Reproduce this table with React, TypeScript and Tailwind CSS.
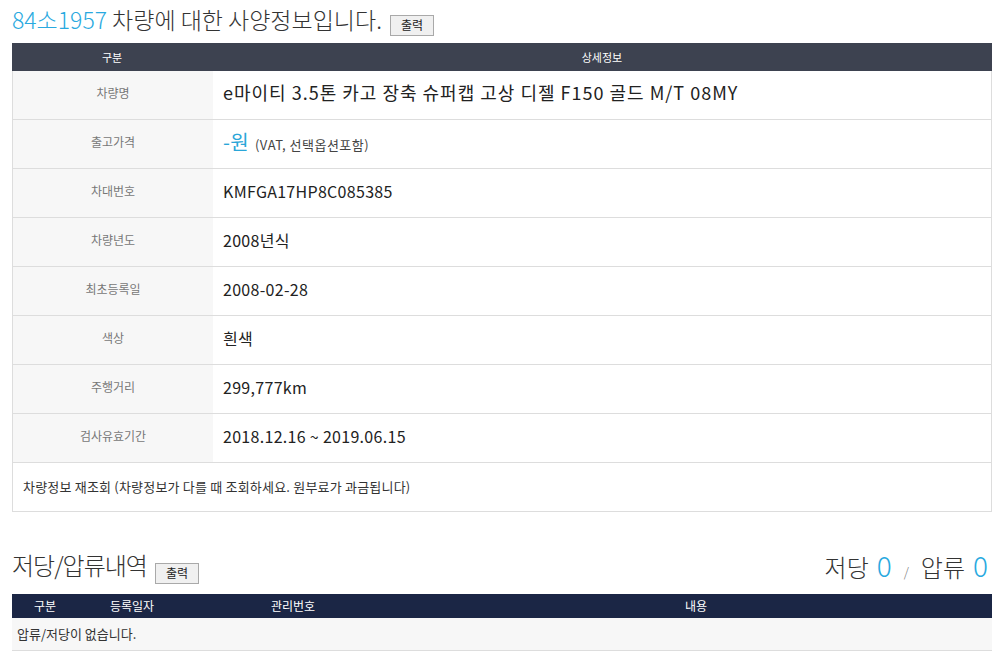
const font = { fontFamily: '"Noto Sans CJK KR", "Noto Sans", sans-serif' }

const specs: { label: string; value: React.ReactNode }[] = [
  { label: "차량명", value: <span className="text-[18px] tracking-[1px]">e마이티 3.5톤 카고 장축 슈퍼캡 고상 디젤 F150 골드 M/T 08MY</span> },
  {
    label: "출고가격",
    value: (
      <span className="flex items-baseline">
        <span className="text-[20px] text-[#2aa6d8]">-원</span>
        <span className="ml-[6px] text-[13px] tracking-[0.5px] text-[#444]">(VAT, 선택옵션포함)</span>
      </span>
    ),
  },
  { label: "차대번호", value: "KMFGA17HP8C085385" },
  { label: "차량년도", value: "2008년식" },
  { label: "최초등록일", value: "2008-02-28" },
  { label: "색상", value: "흰색" },
  { label: "주행거리", value: "299,777km" },
  { label: "검사유효기간", value: "2018.12.16 ~ 2019.06.15" },
]

function PrintButton() {
  return (
    <button className="h-[21px] w-[44px] border border-[#a9a9a9] bg-[#f0f0f0] text-[12px] leading-none text-[#222]">
      출력
    </button>
  )
}

export default function App() {
  return (
    <div className="w-[1008px] bg-white px-3 text-[#333]" style={font}>
      {/* 사양정보 */}
      <div className="flex h-[43px] items-center gap-2 pb-1">
        <h1 className="text-[23px] font-light text-[#333]">
          <span className="text-[#29a9e0]">84소1957</span> 차량에 대한 사양정보입니다.
        </h1>
        <div className="mt-2">
          <PrintButton />
        </div>
      </div>

      <div className="w-[980px]">
        <div className="grid h-[28px] grid-cols-[200px_1fr] items-center bg-[#3d4250] text-center text-[11px] text-white">
          <span>구분</span>
          <span>상세정보</span>
        </div>
        {specs.map((row) => (
          <div key={row.label} className="grid h-[49px] grid-cols-[200px_1fr] border-x border-b border-[#dddddd]">
            <div className="flex items-center justify-center bg-[#f7f7f7] pb-[5px] text-[12px] text-[#777]">{row.label}</div>
            <div className="flex items-center pb-[5px] pl-[10px] text-[16px] tracking-[0.3px] text-[#222]">{row.value}</div>
          </div>
        ))}
        <div className="flex h-[49px] items-center border-x border-b border-[#dddddd] pl-[10px] text-[13px] tracking-[0.2px] text-[#333]">
          차량정보 재조회 (차량정보가 다를 때 조회하세요. 원부료가 과금됩니다)
        </div>
      </div>

      {/* 저당/압류내역 */}
      <div className="mt-[38px] flex h-[44px] w-[980px] items-start justify-between">
        <div className="flex items-start gap-2">
          <h2 className="text-[24px] leading-[30px] font-light tracking-[-1px] text-[#333]">저당/압류내역</h2>
          <div className="mt-[9px]">
            <PrintButton />
          </div>
        </div>
        <div className="flex items-baseline pr-1 text-[24px] leading-[30px] font-light text-[#333]">
          <span>저당</span>
          <span className="ml-2 text-[28px] text-[#29a9e0]">0</span>
          <span className="mx-3 text-[13px] text-[#777]">/</span>
          <span>압류</span>
          <span className="ml-2 text-[28px] text-[#29a9e0]">0</span>
        </div>
      </div>

      <div className="w-[980px]">
        <div className="grid h-[24px] grid-cols-[66px_108px_214px_1fr] items-center bg-[#1b2645] text-center text-[12px] text-white">
          <span>구분</span>
          <span>등록일자</span>
          <span>관리번호</span>
          <span>내용</span>
        </div>
        <div className="flex h-[33px] items-center border-b border-[#dddddd] bg-[#f7f7f7] pl-[5px] text-[13px] text-[#333]">
          압류/저당이 없습니다.
        </div>
      </div>
    </div>
  )
}
